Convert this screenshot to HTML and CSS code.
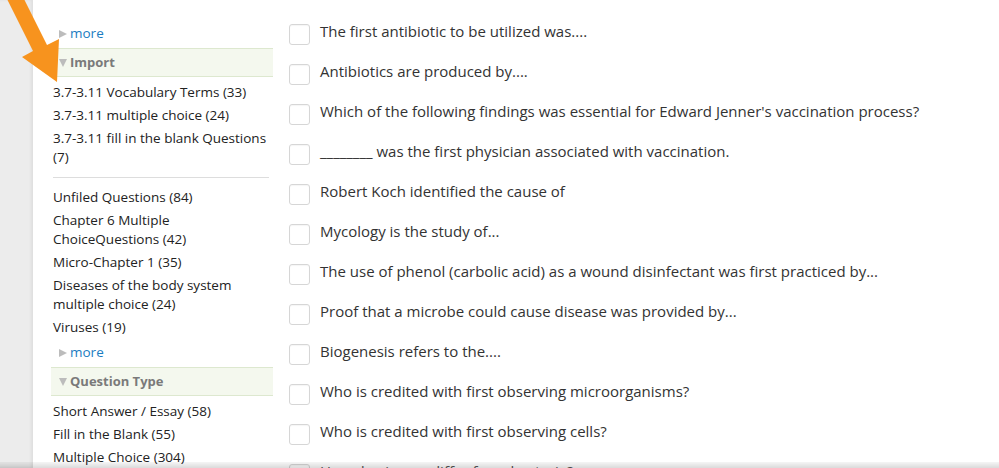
FILE: index.html
```html
<!DOCTYPE html>
<html lang="en">
<head>
<meta charset="UTF-8">
<meta name="viewport" content="width=device-width, initial-scale=1.0">
<title>Question Bank</title>
<link rel="stylesheet" href="styles.css">
</head>
<body>
<div class="page">
  <div class="gutter"></div>

  <div class="sidebar">
    <a class="more first" href="#"><span class="tri-right"></span>more</a>

    <div class="facet-head"><span class="tri-down"></span>Import</div>
    <ul class="facet-list">
      <li>3.7-3.11 Vocabulary Terms (33)</li>
      <li>3.7-3.11 multiple choice (24)</li>
      <li>3.7-3.11 fill in the blank Questions (7)</li>
    </ul>
    <hr class="sep">
    <ul class="facet-list">
      <li>Unfiled Questions (84)</li>
      <li>Chapter 6 Multiple ChoiceQuestions (42)</li>
      <li>Micro-Chapter 1 (35)</li>
      <li>Diseases of the body system multiple choice (24)</li>
      <li>Viruses (19)</li>
    </ul>
    <a class="more" href="#"><span class="tri-right"></span>more</a>

    <div class="facet-head"><span class="tri-down"></span>Question Type</div>
    <ul class="facet-list">
      <li>Short Answer / Essay (58)</li>
      <li>Fill in the Blank (55)</li>
      <li>Multiple Choice (304)</li>
    </ul>
  </div>

  <ul class="questions">
    <li><span class="box"></span><span>The first antibiotic to be utilized was....</span></li>
    <li><span class="box"></span><span>Antibiotics are produced by....</span></li>
    <li><span class="box"></span><span>Which of the following findings was essential for Edward Jenner's vaccination process?</span></li>
    <li><span class="box"></span><span>________ was the first physician associated with vaccination.</span></li>
    <li><span class="box"></span><span>Robert Koch identified the cause of</span></li>
    <li><span class="box"></span><span>Mycology is the study of...</span></li>
    <li><span class="box"></span><span>The use of phenol (carbolic acid) as a wound disinfectant was first practiced by...</span></li>
    <li><span class="box"></span><span>Proof that a microbe could cause disease was provided by...</span></li>
    <li><span class="box"></span><span>Biogenesis refers to the....</span></li>
    <li><span class="box"></span><span>Who is credited with first observing microorganisms?</span></li>
    <li><span class="box"></span><span>Who is credited with first observing cells?</span></li>
    <li class="cut"><span class="box"></span><span>How do viruses differ from bacteria?</span></li>
  </ul>
</div>

<!-- annotation arrow drawn over the page -->
<svg class="arrow" width="80" height="90" viewBox="0 0 80 90">
  <polygon points="4,-7 18,-13 47,45 59,39 57,82 22,57 33,51" fill="#f7931e"/>
</svg>

<div class="bottom-shade"></div>
</body>
</html>
```

FILE: styles.css
```css
body {
  margin: 0;
  font-family: "Open Sans", "Liberation Sans", sans-serif;
  color: #333;
  background: #fff;
  overflow: hidden;
}

.page {
  display: flex;
  height: 468px;
  overflow: hidden;
}

/* grey strip on the far left */
.gutter {
  width: 33px;
  flex-shrink: 0;
  background: #ececec;
  box-shadow: inset -2px 0 3px rgba(0, 0, 0, 0.06);
}

/* Styles for the facet sidebar */
.sidebar {
  width: 222px;
  flex-shrink: 0;
  margin-left: 18px;
  padding-top: 24px;
  font-size: 13.5px;
}

.more {
  display: block;
  margin-top: 4px;
  padding-left: 8px;
  color: #1a7cc1;
  text-decoration: none;
  line-height: 19px;
  font-size: 13.5px;
}

.more.first {
  margin-top: 0;
}

.tri-right,
.tri-down {
  display: inline-block;
  width: 0;
  height: 0;
  margin-right: 3px;
}

.tri-right {
  border-top: 4px solid transparent;
  border-bottom: 4px solid transparent;
  border-left: 8px solid #bcbcbc;
  vertical-align: 0;
}

.tri-down {
  border-left: 4px solid transparent;
  border-right: 4px solid transparent;
  border-top: 8px solid #bcbcbc;
  vertical-align: 0;
}

.facet-head {
  margin-top: 5px;
  height: 27px;
  line-height: 27px;
  padding-left: 8px;
  background: #f4f8ee;
  border-top: 1px solid #dde8cf;
  border-bottom: 1px solid #dde8cf;
  color: #7a7a7a;
  font-weight: bold;
  font-size: 13px;
}

.facet-list {
  list-style: none;
  margin: 4px 0 0;
  padding: 0 2px 0 2px;
}

.facet-list li {
  line-height: 19px;
  padding: 2px 0;
  color: #222;
}

.sep {
  border: none;
  border-top: 1px solid #ddd;
  margin: 8px 4px 8px 2px;
}

/* Styles for the question list */
.questions {
  list-style: none;
  margin: 0 0 0 16px;
  padding: 20px 0 0;
  font-size: 15px;
}

.questions li {
  display: flex;
  gap: 10px;
  height: 40px;
  line-height: 22px;
  color: #333;
}

.questions li.cut {
  height: 18px;
  overflow: hidden;
  color: #555;
}

.box {
  width: 19px;
  height: 19px;
  margin-top: 4px;
  border: 1px solid #d6d6d6;
  border-radius: 3px;
  flex-shrink: 0;
  box-shadow: inset 0 1px 1px rgba(0, 0, 0, 0.04);
}

.arrow {
  position: absolute;
  left: 0;
  top: 0;
}

.bottom-shade {
  position: fixed;
  left: 0;
  right: 0;
  bottom: 0;
  height: 6px;
  background: linear-gradient(to bottom, rgba(0, 0, 0, 0.04), rgba(0, 0, 0, 0.14));
}
```
